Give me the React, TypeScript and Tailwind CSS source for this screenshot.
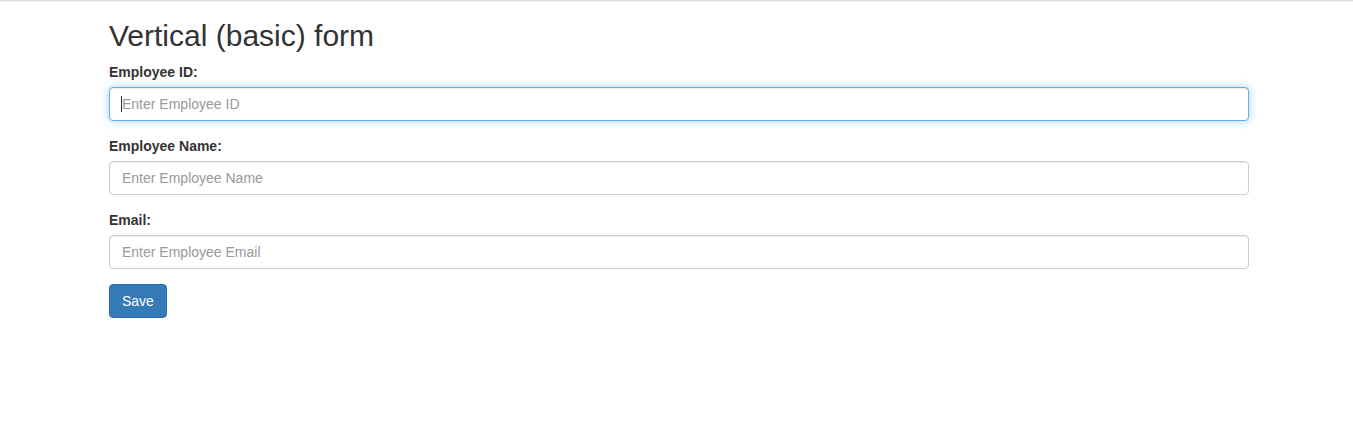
import React from "react";

export default function App() {
  const font = { fontFamily: '"Liberation Sans", Arial, Helvetica, sans-serif' };
  return (
    <div className="min-h-[428px] bg-white text-[#333] text-[14px] leading-[20px]" style={font}>
      <div className="h-[1px] bg-[#e3e3e3]" />
      <div className="h-[1px] bg-[#f3f3f3]" />
      <div className="w-[1140px] ml-[109px]">
        <h2 className="text-[30px] leading-[33px] font-normal mt-[17px] mb-[10px]">Vertical (basic) form</h2>
        <form onSubmit={(e) => e.preventDefault()}>
          <div className="mb-[15px]">
            <label className="block font-bold mb-[5px]">Employee ID:</label>
            <div className="relative">
              <input
                type="text"
                placeholder="Enter Employee ID"
                className="block w-full h-[34px] px-[12px] py-[6px] text-[14px] bg-white border border-[#66afe9] rounded-[4px] outline-none placeholder:text-[#999] shadow-[inset_0_1px_1px_rgba(0,0,0,0.075),0_0_8px_rgba(102,175,233,0.6)]"
                style={font}
              />
              <span className="absolute left-[12px] top-[9px] w-px h-[16px] bg-[#333]" />
            </div>
          </div>
          <div className="mb-[15px]">
            <label className="block font-bold mb-[5px]">Employee Name:</label>
            <input
              type="text"
              placeholder="Enter Employee Name"
              className="block w-full h-[34px] px-[12px] py-[6px] text-[14px] bg-white border border-[#ccc] rounded-[4px] outline-none placeholder:text-[#999] shadow-[inset_0_1px_1px_rgba(0,0,0,0.075)]"
              style={font}
            />
          </div>
          <div className="mb-[15px]">
            <label className="block font-bold mb-[5px]">Email:</label>
            <input
              type="email"
              placeholder="Enter Employee Email"
              className="block w-full h-[34px] px-[12px] py-[6px] text-[14px] bg-white border border-[#ccc] rounded-[4px] outline-none placeholder:text-[#999] shadow-[inset_0_1px_1px_rgba(0,0,0,0.075)]"
              style={font}
            />
          </div>
          <button
            type="submit"
            className="h-[34px] px-[12px] py-[6px] text-[14px] leading-[20px] text-white bg-[#337ab7] border border-[#2e6da4] rounded-[4px]"
            style={font}
          >
            Save
          </button>
        </form>
      </div>
    </div>
  );
}
